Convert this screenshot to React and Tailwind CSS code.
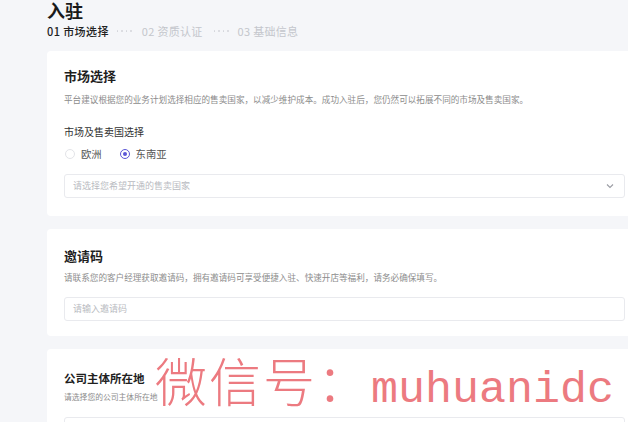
import React from "react";

const font = { fontFamily: '"Noto Sans CJK SC", "Noto Sans", sans-serif' };

function Card({ children, className = "" }) {
  return (
    <div className={`w-[595px] bg-white rounded-[4px] px-[17px] ${className}`}>{children}</div>
  );
}

function Dots({ className = "" }) {
  return (
    <span className={`flex items-center gap-[3px] ${className}`}>
      <span className="w-[1.5px] h-[1.5px] rounded-full bg-[#d3d5da]" />
      <span className="w-[1.5px] h-[1.5px] rounded-full bg-[#d3d5da]" />
      <span className="w-[1.5px] h-[1.5px] rounded-full bg-[#d3d5da]" />
      <span className="w-[1.5px] h-[1.5px] rounded-full bg-[#d3d5da]" />
    </span>
  );
}

export default function App() {
  return (
    <div
      className="relative w-[628px] h-[422px] overflow-hidden bg-[#f5f6f9] pl-[47px]"
      style={font}
    >
      <div className="text-[18px] leading-[20px] font-bold text-[#1a1a1a]">入驻</div>
      <div className="flex items-center text-[11px] leading-[16px] mt-[3px] text-[#c4c6cc]">
        <span className="font-medium text-[#222] tracking-[0.4px]">01 市场选择</span>
        <Dots className="ml-[8px] mr-[10px]" />
        <span className="tracking-[0.3px]">02 资质认证</span>
        <Dots className="ml-[11px] mr-[9px]" />
        <span className="tracking-[0.3px]">03 基础信息</span>
      </div>

      <Card className="mt-[12px] pt-[15px] pb-[18px]">
        <div className="text-[13px] leading-[20px] font-bold text-[#1f1f1f]">市场选择</div>
        <div className="text-[8.6px] leading-[14px] mt-[6px] text-[#8c8c8c] whitespace-nowrap">
          平台建议根据您的业务计划选择相应的售卖国家，以减少维护成本。成功入驻后，您仍然可以拓展不同的市场及售卖国家。
        </div>
        <div className="text-[10px] leading-[14px] mt-[19px] text-[#333]">市场及售卖国选择</div>
        <div className="flex items-center mt-[8px] text-[10.3px] leading-[14px] text-[#555]">
          <span className="w-[10px] h-[10px] rounded-full border border-[#e3e4e8] bg-white ml-[1px]" />
          <span className="ml-[6px]">欧洲</span>
          <span className="ml-[18px] w-[10px] h-[10px] rounded-full border border-[#5b57d6] flex items-center justify-center">
            <span className="w-[4px] h-[4px] rounded-full bg-[#5b57d6]" />
          </span>
          <span className="ml-[6px]">东南亚</span>
        </div>
        <div className="mt-[13px] h-[24px] border border-[#e9eaee] rounded-[3px] flex items-center justify-between pl-[8px] pr-[10px]">
          <span className="text-[9px] text-[#b9bbc1]">请选择您希望开通的售卖国家</span>
          <svg width="8" height="6" viewBox="0 0 8 6" fill="none">
            <path d="M1 1.5 L4 4.5 L7 1.5" stroke="#9a9ca3" strokeWidth="1.1" />
          </svg>
        </div>
      </Card>

      <Card className="mt-[13px] pt-[17px] pb-[15px]">
        <div className="text-[13px] leading-[20px] font-bold text-[#1f1f1f]">邀请码</div>
        <div className="text-[8.6px] leading-[14px] mt-[4px] text-[#8c8c8c] whitespace-nowrap">
          请联系您的客户经理获取邀请码，拥有邀请码可享受便捷入驻、快速开店等福利，请务必确保填写。
        </div>
        <div className="mt-[13px] h-[24px] border border-[#e9eaee] rounded-[3px] flex items-center pl-[8px]">
          <span className="text-[9px] text-[#b9bbc1]">请输入邀请码</span>
        </div>
      </Card>

      <Card className="mt-[13px] pt-[19px] pb-[20px]">
        <div className="text-[11.5px] leading-[20px] font-bold text-[#1f1f1f]">公司主体所在地</div>
        <div className="text-[7.8px] leading-[14px] mt-[2px] text-[#8c8c8c] whitespace-nowrap">
          请选择您的公司主体所在地
        </div>
        <div className="mt-[13px] h-[24px] border border-[#e9eaee] rounded-[3px]" />
      </Card>

      <div className="absolute left-[155px] top-[350px] flex items-baseline text-[#ec7a80] whitespace-nowrap pointer-events-none">
        <span
          className="text-[52px] leading-[60px] font-light tracking-[2px]"
          style={{ fontFamily: '"Noto Sans CJK SC", sans-serif' }}
        >
          微信号：
        </span>
        <span
          className="text-[45px] leading-[60px]"
          style={{ fontFamily: '"Liberation Mono", monospace' }}
        >
          muhuanidc
        </span>
      </div>
    </div>
  );
}
